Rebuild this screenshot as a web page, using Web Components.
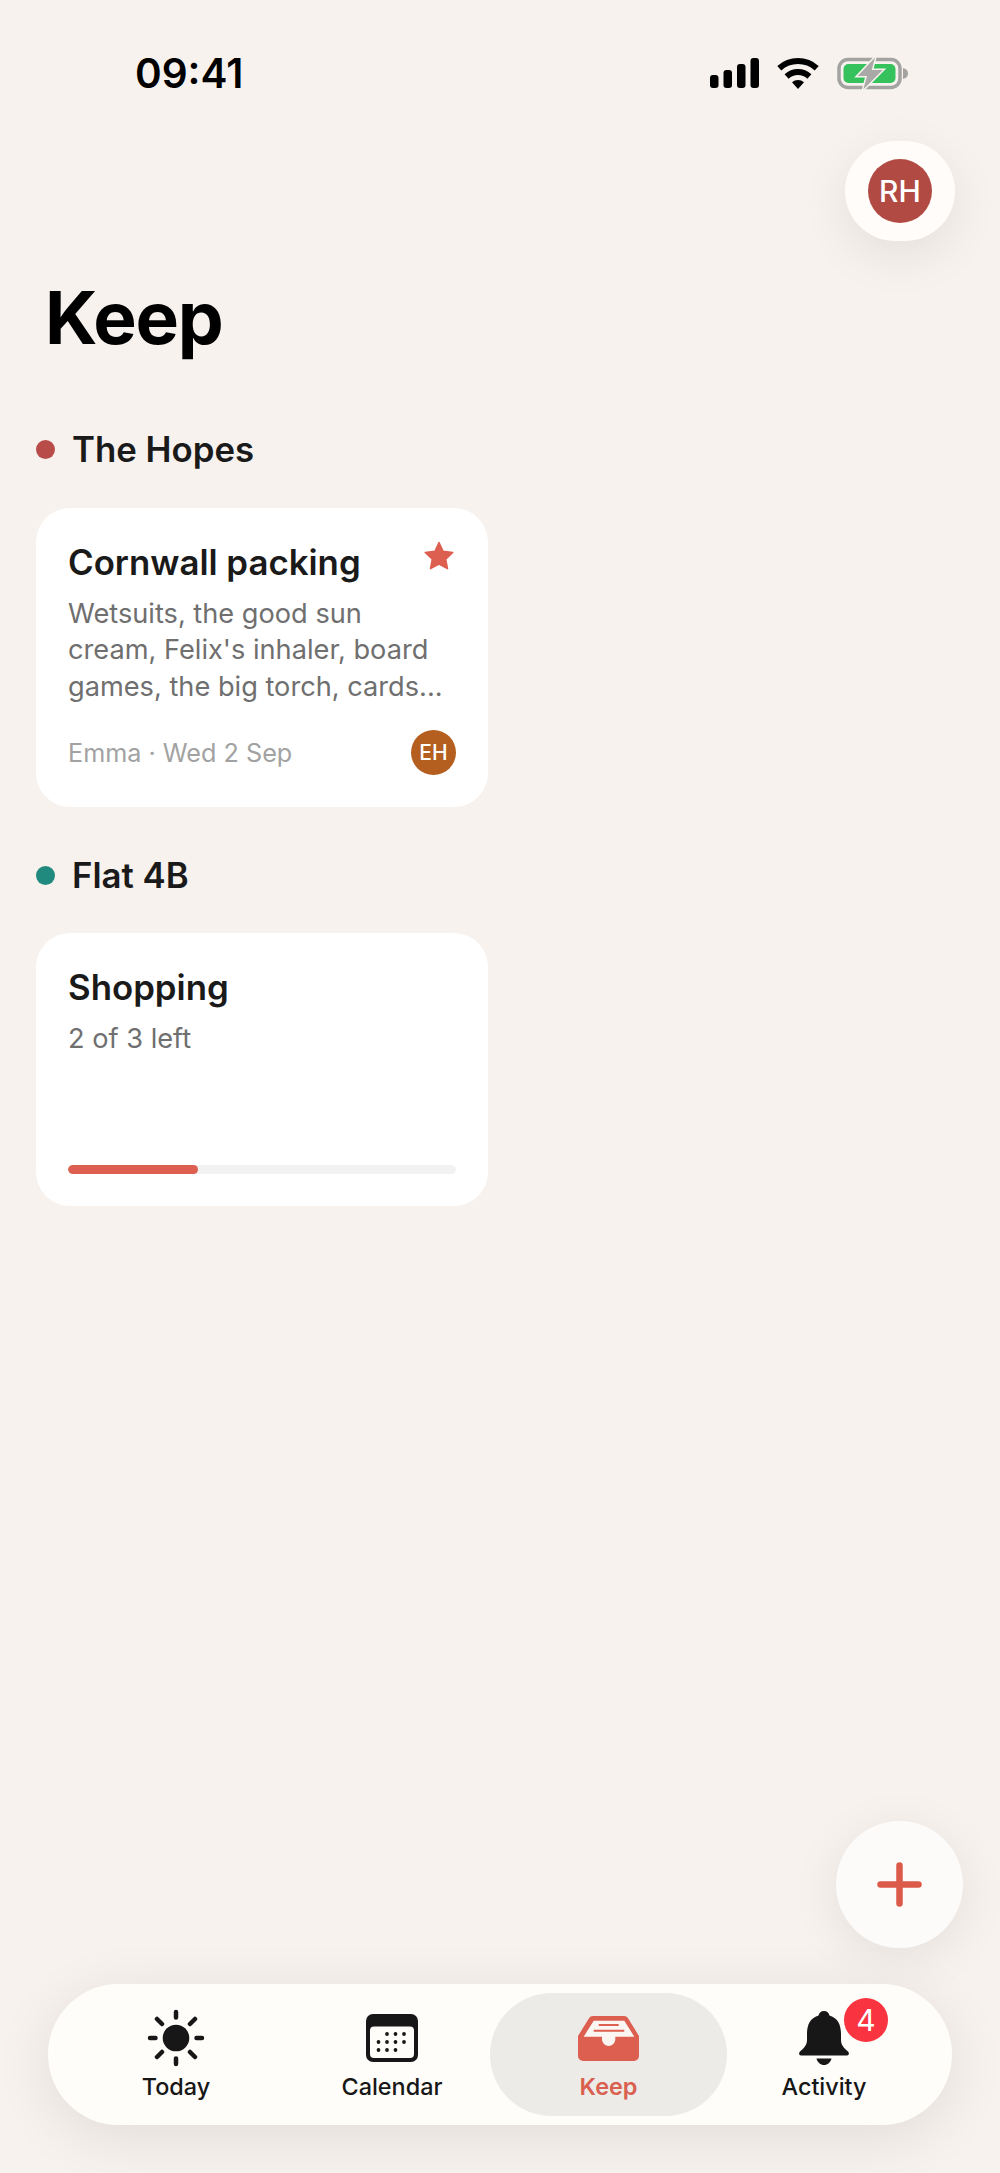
<!DOCTYPE html>
<html lang="en">
<head>
<meta charset="utf-8">
<title>Keep</title>
<style>
    html, body { margin: 0; background: #f7f2ee; }
    body { font-family: Inter, "Liberation Sans", sans-serif; color: #1a1a1a; }
    svg { display: block; }
</style>
</head>
<body>
<keep-app>
    <status-bar time="09:41"></status-bar>
    <avatar-chip initials="RH"></avatar-chip>
    <page-title>Keep</page-title>

    <group-heading color="#b84c48" style="margin-top:67px">The Hopes</group-heading>
    <note-card title="Cornwall packing" starred style="height:299px">
        <card-text>Wetsuits, the good sun cream, Felix's inhaler, board games, the big torch, cards...</card-text>
        <card-meta slot="foot" initials="EH">Emma · Wed 2 Sep</card-meta>
    </note-card>

    <group-heading color="#1f8a7d" style="margin-top:48px">Flat 4B</group-heading>
    <note-card title="Shopping" style="height:273px;margin-top:38px">
        <card-text>2 of 3 left</card-text>
        <progress-line slot="foot" value="33.4"></progress-line>
    </note-card>

    <fab-button></fab-button>

    <tab-bar>
        <tab-item label="Today">
            <svg slot="icon" width="60" height="60" viewBox="0 0 60 60" fill="none" stroke="#171717" stroke-width="4.5" stroke-linecap="round">
                <circle cx="30" cy="30" r="13.3" fill="#171717" stroke="none"/>
                <path d="M30 4v5.5M30 50.5V56M4 30h5.500M50.5 30H56M11 11l5 5M44 44l5 5M49 11l-5 5M16 44l-5 5"/>
            </svg>
        </tab-item>
        <tab-item label="Calendar">
            <svg slot="icon" width="52" height="48" viewBox="0 0 52 48">
                <rect width="52" height="48" rx="7" fill="#171717"/>
                <rect x="4" y="12.5" width="44" height="31.5" rx="4" fill="#fffdfa"/>
                <g fill="#171717">
                    <circle cx="21" cy="20" r="1.9"/><circle cx="29.5" cy="20" r="1.9"/><circle cx="38" cy="20" r="1.9"/>
                    <circle cx="12.5" cy="28" r="1.9"/><circle cx="21" cy="28" r="1.9"/><circle cx="29.5" cy="28" r="1.9"/><circle cx="38" cy="28" r="1.9"/>
                    <circle cx="12.5" cy="36" r="1.9"/><circle cx="21" cy="36" r="1.9"/><circle cx="29.5" cy="36" r="1.9"/>
                </g>
            </svg>
        </tab-item>
        <tab-item label="Keep" active>
            <svg slot="icon" width="61" height="45" viewBox="0 0 61 45">
                <path fill="#dc5f4f" d="M15 0H46c2 0 3.5 1 4.500 3L61 20V40a5 5 0 0 1-5 5H5a5 5 0 0 1-5-5V20L10.5 3C11.5 1 13 0 15 0Z"/>
                <path fill="#fbf6f2" d="M15.7 4.7H46.3L56.3 20.7H37.3V24a6.7 6.700 0 0 1-13.3 0V20.7H5.7Z"/>
                <path stroke="#dc5f4f" stroke-width="2" d="M20.7 9H40.7M15.7 14.7H46.3"/>
            </svg>
        </tab-item>
        <tab-item label="Activity" badge="4">
            <svg slot="icon" width="50" height="54" viewBox="0 0 50 54" fill="#171717">
                <path d="M25 0c-3 0-5 2-5.5 4.500C11 7 8 14 8 23v6c0 5-3 8-7 11.500c-1.500 1.500-1 4 1 4H48c2 0 2.500-2.500 1-4c-4-3.500-7-6.500-7-11.500v-6C42 14 39 7 30.500 4.500C30 2 28 0 25 0Z"/>
                <path d="M17.5 47.500h15c-1 4-4 6.500-7.500 6.500s-6.500-2.500-7.500-6.500Z"/>
            </svg>
        </tab-item>
    </tab-bar>
</keep-app>

<script>
function define(name, css, html) {
    customElements.define(name, class extends HTMLElement {
        constructor() {
            super();
            this.attachShadow({ mode: 'open' });
        }
        connectedCallback() {
            const body = typeof html === 'function' ? html(this) : html;
            this.shadowRoot.innerHTML = `<style>${css}</style>${body}`;
        }
    });
}

define('keep-app', `
    :host { display: flex; flex-direction: column; height: 2173px; overflow: hidden; }
`, `<slot></slot>`);

define('status-bar', `
    :host { display: flex; justify-content: space-between; align-items: center; height: 146px; margin-bottom: -5px; box-sizing: border-box; padding: 0 92px 0 135px; }
    .time { margin-top: 2px; font-size: 40.5px; font-weight: 600; line-height: 46px; color: #000; }
    .icons { display: flex; align-items: center; }
    .signal { margin-right: 18px; }
    .wifi { margin-right: 18px; }
`, el => `
    <span class="time">${el.getAttribute('time')}</span>
    <div class="icons">
        <svg class="signal" width="49" height="30" viewBox="0 0 49 30" fill="#000">
            <rect x="0" y="17" width="8.5" height="13" rx="3"/>
            <rect x="13.5" y="12" width="8.5" height="18" rx="3"/>
            <rect x="27" y="6" width="8.5" height="24" rx="3"/>
            <rect x="40.5" y="0" width="8.5" height="30" rx="3"/>
        </svg>
        <svg class="wifi" width="42" height="31" viewBox="0 0 42 31">
            <path d="M2.3 10.2A28 28 0 0 1 39.7 10.2M9.6 18.4A17 17 0 0 1 32.4 18.4" fill="none" stroke="#000" stroke-width="6"/>
            <path d="M21 31L15 24.3A9 9 0 0 1 27 24.3Z" fill="#000"/>
        </svg>
        <svg width="71" height="33" viewBox="0 0 71 33">
            <rect x="2" y="2.5" width="61" height="28" rx="9" fill="none" stroke="#a3a3a1" stroke-width="3.5"/>
            <rect x="6.5" y="7" width="52" height="19" rx="5" fill="#35c25c"/>
            <path d="M66 11c3 .5 5 2.500 5 5.500s-2 5-5 5.500Z" fill="#a3a3a1"/>
            <path d="M38 .5L20.7 19H30L26.3 32.5L45.7 13H34.7Z" fill="#a9a9a7" stroke="#f7f2ee" stroke-width="3" paint-order="stroke"/>
        </svg>
    </div>
`);

define('avatar-chip', `
    :host { display: flex; align-self: flex-end; justify-content: center; align-items: center; width: 110px; height: 100px; margin-right: 45px; border-radius: 50px; background: #fffcf9; box-shadow: 0 14px 50px rgba(0,0,0,.08); }
    .face { display: flex; justify-content: center; align-items: center; width: 64px; height: 64px; border-radius: 50%; background: #b14a42; color: #fff; font-size: 30px; font-weight: 500; }
`, el => `<div class="face">${el.getAttribute('initials')}</div>`);

define('page-title', `
    :host { display: block; margin: 33px 0 0 45px; font-size: 73px; font-weight: 700; line-height: 88px; color: #000; letter-spacing: -1.3px; }
`, `<slot></slot>`);

define('group-heading', `
    :host { display: flex; align-items: center; gap: 17px; height: 40px; margin-left: 36px; font-size: 34.8px; font-weight: 560; line-height: 40px; color: #1a1a1a; }
    .dot { width: 19px; height: 19px; border-radius: 50%; }
`, el => `<span class="dot" style="background:${el.getAttribute('color')}"></span><slot></slot>`);

define('note-card', `
    :host { display: flex; flex-direction: column; box-sizing: border-box; width: 452px; margin: 39px 0 0 36px; padding: 32px; border-radius: 34px; background: #fff; position: relative; }
    .title { font-size: 34.8px; font-weight: 560; line-height: 44px; color: #1a1a1a; }
    .star { position: absolute; top: 33px; right: 34px; }
    .foot { margin-top: auto; }
`, el => `
    <div class="title">${el.getAttribute('title')}</div>
    ${el.hasAttribute('starred') ? `<svg class="star" width="30" height="29" viewBox="0 0 30 29"><path fill="#dc5f4f" stroke="#dc5f4f" stroke-width="1.5" stroke-linejoin="round" d="M15 1.5L19.1 10.3L28.8 11.5L21.7 18.2L23.5 27.7L15 23L6.5 27.7L8.3 18.2L1.2 11.5L10.9 10.3Z"/></svg>` : ''}
    <slot></slot>
    <div class="foot"><slot name="foot"></slot></div>
`);

define('card-text', `
    :host { display: block; margin-top: 12px; font-size: 27.2px; font-weight: 400; line-height: 36.3px; color: #6f6f6f; }
`, `<slot></slot>`);

define('card-meta', `
    :host { display: flex; justify-content: space-between; align-items: center; font-size: 25.2px; color: #a2a2a2; }
    .face { display: flex; justify-content: center; align-items: center; width: 45px; height: 45px; border-radius: 50%; background: #b45f1f; color: #fff; font-size: 21px; font-weight: 500; }
`, el => `<slot></slot><span class="face">${el.getAttribute('initials')}</span>`);

define('progress-line', `
    :host { display: block; height: 9px; border-radius: 5px; background: #f2f2f2; overflow: hidden; }
    .fill { height: 100%; border-radius: 5px; background: #dc5f4f; }
`, el => `<div class="fill" style="width:${el.getAttribute('value')}%"></div>`);

define('fab-button', `
    :host { display: flex; align-self: flex-end; justify-content: center; align-items: center; width: 127px; height: 127px; margin: auto 37px 36px 0; border-radius: 50%; background: #fdfbf9; box-shadow: 0 10px 50px rgba(0,0,0,.08); }
`, `<svg width="45" height="45" viewBox="0 0 45 45"><path d="M22.5 3.5V41.5M3.5 22.5H41.5" stroke="#dc5a4a" stroke-width="6.5" stroke-linecap="round"/></svg>`);

define('tab-bar', `
    :host { display: grid; grid-template-columns: repeat(4, 216px); box-sizing: border-box; height: 141px; margin: 0 48px 48px; padding: 9px 20px; border-radius: 71px; background: #fffdfa; box-shadow: 0 12px 60px rgba(0,0,0,.09); }
`, `<slot></slot>`);

define('tab-item', `
    :host { display: flex; flex-direction: column; align-items: center; box-sizing: border-box; height: 123px; padding-top: 17px; position: relative; font-size: 23.4px; font-weight: 500; color: #171717; }
    :host([active]) { margin: 0 -11px 0 -10px; border-radius: 62px; background: #ecebe8; color: #d9604f; font-weight: 600; }
    .icon { display: flex; justify-content: center; align-items: center; height: 56px; }
    .label { margin-top: 6px; line-height: 30px; }
    .badge { position: absolute; top: 5px; left: calc(50% + 20px); width: 44px; height: 44px; border-radius: 50%; background: #f9333f; color: #fff; font-size: 30px; font-weight: 400; line-height: 44px; text-align: center; }
`, el => `
    <div class="icon"><slot name="icon"></slot></div>
    <div class="label">${el.getAttribute('label')}</div>
    ${el.hasAttribute('badge') ? `<span class="badge">${el.getAttribute('badge')}</span>` : ''}
`);
</script>
</body>
</html>
